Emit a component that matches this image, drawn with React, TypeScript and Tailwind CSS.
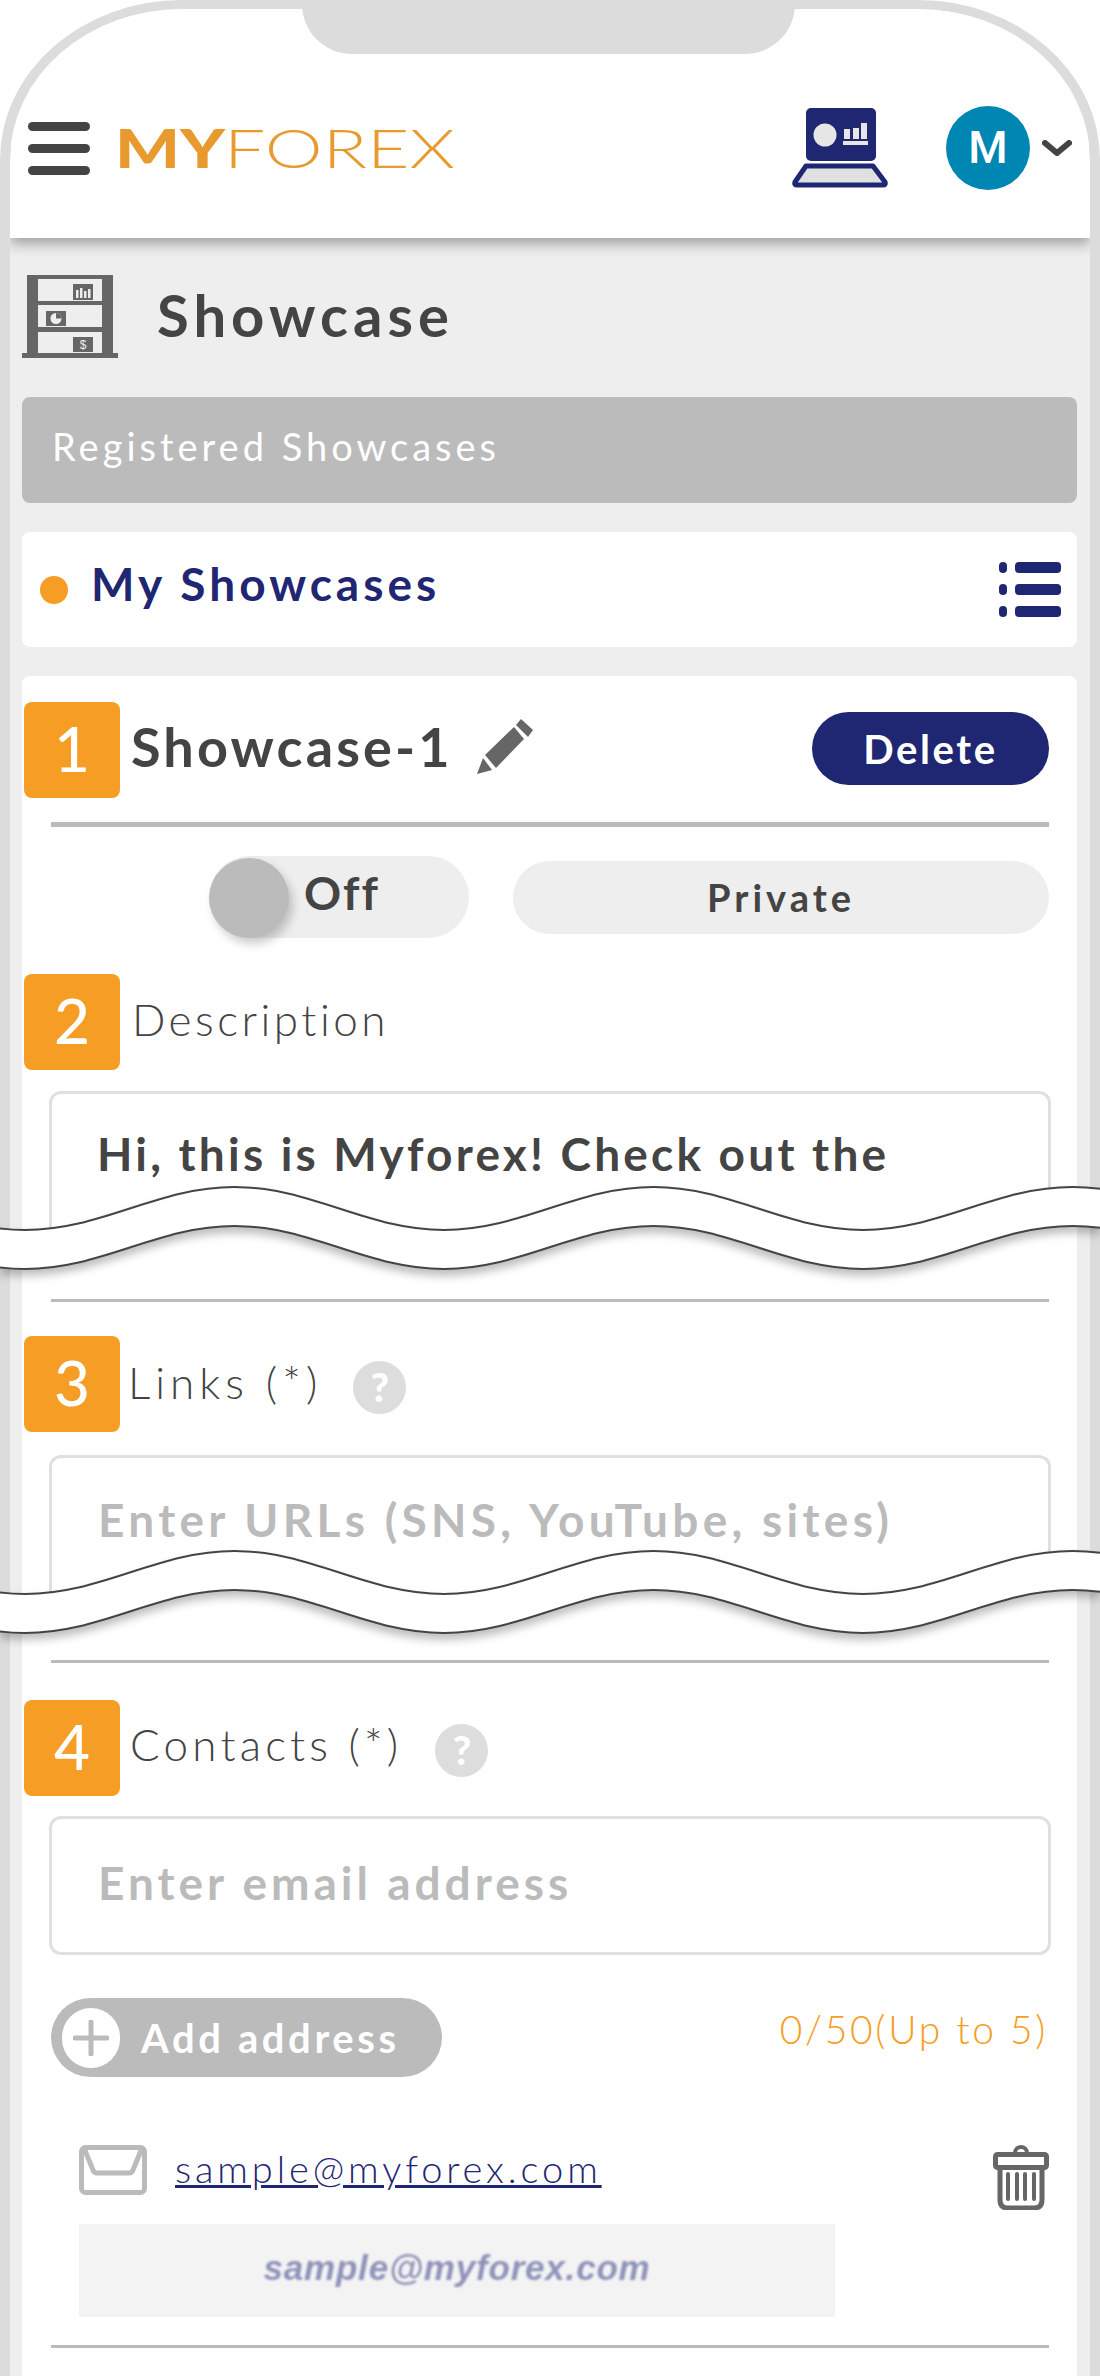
import type { ReactNode } from 'react'

const PERIOD = 419
const HALF = PERIOD / 2
const AMP = 43
const START = 25 - PERIOD

// y of the curve at each half period, from the trough at x=25
function nodes(baseY: number) {
  const out: { x: number; y: number }[] = []
  for (let i = 0; i < 10; i++) out.push({ x: START + i * HALF, y: i % 2 === 0 ? baseY : baseY - AMP })
  return out
}

function forward(baseY: number) {
  const n = nodes(baseY)
  let d = `M ${n[0].x} ${n[0].y}`
  for (let i = 1; i < n.length; i++) {
    d += ` C ${n[i - 1].x + HALF * 0.37} ${n[i - 1].y} ${n[i].x - HALF * 0.37} ${n[i].y} ${n[i].x} ${n[i].y}`
  }
  return d
}

function backward(baseY: number) {
  const n = nodes(baseY).reverse()
  let d = ` L ${n[0].x} ${n[0].y}`
  for (let i = 1; i < n.length; i++) {
    d += ` C ${n[i - 1].x - HALF * 0.37} ${n[i - 1].y} ${n[i].x + HALF * 0.37} ${n[i].y} ${n[i].x} ${n[i].y}`
  }
  return d
}

function WaveBreak({ first }: { first?: boolean }) {
  return (
    <svg
      viewBox="0 0 1100 120"
      className={`absolute left-0 w-[1100px] h-[120px] z-20 drop-shadow-[0_6px_4px_rgba(0,0,0,0.25)] ${
        first ? 'top-[1180px]' : 'top-[1544px]'
      }`}
    >
      <path d={`${forward(50)}${backward(89)} Z`} fill="#fff" />
      <path d={forward(50)} fill="none" stroke="#444" strokeWidth="2" />
      <path d={forward(89)} fill="none" stroke="#444" strokeWidth="2" />
    </svg>
  )
}

function Badge({ n }: { n: number }) {
  return (
    <div className="w-[96px] h-[96px] shrink-0 rounded-lg bg-[#f59d24] pb-[4px] flex items-center justify-center text-white text-[62px] font-medium leading-none">
      {n}
    </div>
  )
}

function HelpDot() {
  return (
    <div className="w-[53px] h-[53px] rounded-full bg-[#dddddd] text-white font-black text-[40px] leading-none flex items-center justify-center">
      ?
    </div>
  )
}

function Rule({ thick, className }: { thick?: boolean; className: string }) {
  return <div className={`ml-[29px] mr-[28px] bg-[#bbbbbb] ${thick ? 'h-[5px]' : 'h-[3px]'} ${className}`} />
}

function Field({ className, children }: { className: string; children: ReactNode }) {
  return (
    <div
      className={`ml-[27px] mr-[26px] border-[3px] border-[#e0e0e0] rounded-xl text-[46px] leading-[56px] font-bold whitespace-nowrap ${className}`}
    >
      {children}
    </div>
  )
}

function Logo() {
  return (
    <svg viewBox="0 0 340 70" className="w-[340px] h-[70px] ml-[25px]">
      <text
        x="0"
        y="55"
        fontFamily="Lato"
        fontWeight="900"
        fontSize="54"
        fill="#e99a2e"
        textLength="110"
        lengthAdjust="spacingAndGlyphs"
      >
        MY
      </text>
      <text
        x="109"
        y="55"
        fontFamily="Lato"
        fontWeight="300"
        fontSize="54"
        fill="#e99a2e"
        textLength="231"
        lengthAdjust="spacingAndGlyphs"
      >
        FOREX
      </text>
    </svg>
  )
}

function ComputerIcon() {
  return (
    <svg viewBox="0 0 96 80" className="w-[96px] h-[80px]">
      <rect x="14" y="0" width="70" height="53" rx="5" fill="#1f2672" />
      <circle cx="33" cy="27" r="11.5" fill="#e6e6e6" />
      <rect x="52" y="21" width="6" height="10" fill="#e6e6e6" />
      <rect x="61" y="20" width="6" height="11" fill="#e6e6e6" />
      <rect x="69" y="15" width="6" height="16" fill="#e6e6e6" />
      <rect x="51" y="33" width="25" height="4" fill="#e6e6e6" />
      <path d="M14 58 H81 L93 74 Q94 77 91 77 H5 Q2 77 3 74 Z" fill="#e0e0e0" stroke="#1f2672" strokeWidth="5" strokeLinejoin="round" />
    </svg>
  )
}

function ShelfIcon() {
  return (
    <svg viewBox="0 0 96 83" className="w-[96px] h-[83px] shrink-0">
      <rect x="5" y="0" width="86" height="78" fill="#666" />
      <rect x="0" y="78" width="96" height="5" fill="#666" />
      <rect x="16" y="4" width="64" height="22" fill="#eee" />
      <rect x="16" y="30" width="64" height="22" fill="#eee" />
      <rect x="16" y="57" width="64" height="21" fill="#eee" />
      <rect x="51" y="9" width="20" height="16" fill="#666" />
      <rect x="54" y="15" width="2.5" height="8" fill="#eee" />
      <rect x="58" y="13" width="2.5" height="10" fill="#eee" />
      <rect x="62" y="16" width="2.5" height="7" fill="#eee" />
      <rect x="66" y="14" width="2.5" height="9" fill="#eee" />
      <rect x="24" y="36" width="20" height="15" fill="#666" />
      <circle cx="34" cy="43.5" r="5.5" fill="#eee" />
      <path d="M34 43.5 V38 A5.5 5.5 0 0 1 39.5 43.5 Z" fill="#666" />
      <rect x="51" y="62" width="20" height="15" fill="#666" />
      <text x="61" y="74" textAnchor="middle" fontSize="12" fill="#eee" fontFamily="Liberation Sans">$</text>
    </svg>
  )
}

function Pencil() {
  return (
    <svg viewBox="0 0 58 57" className="w-[58px] h-[57px]">
      <path d="M1 56 L7 40 L16 52 Z" fill="#666" />
      <path d="M9 37 L20 50 L48 21 L38 9 Z" fill="#666" />
      <path d="M45 1 L57 12 L52 19 L40 7 Z" fill="#666" />
    </svg>
  )
}

function Envelope() {
  return (
    <svg viewBox="0 0 68 50" className="w-[68px] h-[50px] shrink-0">
      <rect x="2.5" y="2.5" width="63" height="45" rx="4" fill="none" stroke="#bbb" strokeWidth="5" />
      <path d="M5 3 L14 25 Q15 28 18 28 H50 Q53 28 54 25 L63 3" fill="none" stroke="#bbb" strokeWidth="5" />
    </svg>
  )
}

function Trash() {
  return (
    <svg viewBox="0 0 56 65" className="w-[56px] h-[65px] shrink-0">
      <circle cx="28" cy="8" r="6" fill="none" stroke="#666" strokeWidth="4" />
      <rect x="2.5" y="9.5" width="51" height="13" rx="2" fill="#fff" stroke="#666" strokeWidth="5" />
      <path d="M7 23 V55 Q7 63 15 63 H41 Q49 63 49 55 V23" fill="none" stroke="#666" strokeWidth="5" />
      {[15, 24, 32, 41].map((x) => (
        <rect key={x} x={x - 2} y="27" width="4" height="29" rx="2" fill="#666" />
      ))}
    </svg>
  )
}

export default function App() {
  return (
    <div className="relative w-[1100px] h-[2376px] overflow-hidden bg-white text-[#444] font-['Lato','Noto_Sans',sans-serif]">
      <div className="h-full bg-[#eeeeee] border-x-[10px] border-t-[9px] border-[#dcdcdc] rounded-t-[182px_160px] overflow-hidden flex flex-col">
        <header className="relative z-10 shrink-0 h-[229px] bg-white pt-[97px] pl-[18px] flex items-start shadow-[0_6px_12px_rgba(0,0,0,0.32)]">
          <div className="h-[84px] flex items-center">
            <div className="flex flex-col gap-[13px] w-[62px]">
              <div className="h-[9px] rounded-full bg-[#444]" />
              <div className="h-[9px] rounded-full bg-[#444]" />
              <div className="h-[9px] rounded-full bg-[#444]" />
            </div>
            <Logo />
          </div>
          <div className="ml-auto h-[84px] flex items-center pr-[18px]">
            <ComputerIcon />
            <div className="ml-[58px] w-[84px] h-[84px] rounded-full bg-[#0086b3] text-white text-[45px] font-medium flex items-center justify-center font-['Roboto',sans-serif]">
              M
            </div>
            <svg viewBox="0 0 30 16" className="ml-[12px] w-[30px] h-[16px]">
              <path d="M3 3 L15 13 L27 3" fill="none" stroke="#444" strokeWidth="6" strokeLinecap="round" strokeLinejoin="round" />
            </svg>
          </div>
        </header>

        <main className="flex-1 pl-[12px] pr-[13px]">
          <div className="mt-[37px] h-[83px] flex items-center">
            <ShelfIcon />
            <h1 className="ml-[39px] -mt-[3px] text-[58px] font-bold tracking-[5px] leading-none">Showcase</h1>
          </div>

          <div className="mt-[39px] h-[106px] rounded-lg bg-[#bbbbbb] pl-[30px] pb-[8px] flex items-center text-white text-[38px] tracking-[4px]">
            Registered Showcases
          </div>

          <div className="mt-[29px] h-[115px] rounded-lg bg-white pl-[18px] pr-[16px] flex items-center">
            <span className="w-[28px] h-[28px] rounded-full bg-[#f59d24]" />
            <h2 className="ml-[23px] -mt-[12px] text-[#1f2672] text-[46px] font-bold tracking-[4px]">My Showcases</h2>
            <div className="ml-auto w-[62px] flex flex-col gap-[11px]">
              {[0, 1, 2].map((i) => (
                <div key={i} className="flex gap-[8px] h-[11px]">
                  <div className="w-[8px] rounded-sm bg-[#1f2672]" />
                  <div className="flex-1 rounded-sm bg-[#1f2672]" />
                </div>
              ))}
            </div>
          </div>

          <section className="mt-[29px] h-[1800px] rounded-t-lg bg-white pt-[26px]">
            <div className="pl-[2px] pr-[28px] flex items-center">
              <Badge n={1} />
              <h3 className="ml-[11px] -mt-[8px] text-[54px] font-bold tracking-[3.1px]">Showcase-1</h3>
              <div className="ml-[23px] -mt-[8px]">
                <Pencil />
              </div>
              <button
                type="button"
                className="ml-auto -mt-[3px] w-[237px] h-[73px] rounded-full bg-[#1f2672] text-white text-[40px] font-bold tracking-[2.6px]"
              >
                Delete
              </button>
            </div>
            <Rule thick className="mt-[24px]" />

            <div className="mt-[29px] h-[82px] flex items-center">
              <div className="relative ml-[187px] w-[260px] h-[82px] rounded-full bg-[#eeeeee]">
                <div className="absolute left-0 top-[2px] w-[80px] h-[80px] rounded-full bg-[#bbbbbb] shadow-[4px_6px_10px_rgba(0,0,0,0.2)]" />
                <span className="absolute left-[95px] top-[7px] text-[46px] leading-[60px] font-bold tracking-[2px]">Off</span>
              </div>
              <div className="ml-[44px] w-[536px] h-[73px] rounded-full bg-[#eeeeee] flex items-center justify-center text-[38px] font-bold tracking-[4px]">
                Private
              </div>
            </div>

            <div className="mt-[36px] pl-[2px] flex items-center">
              <Badge n={2} />
              <span className="ml-[12px] text-[44px] font-light tracking-[3.5px] -mt-[6px]">Description</span>
            </div>
            <Field className="mt-[21px] h-[137px] pl-[45px] pt-[32px] tracking-[3.2px] border-b-0 rounded-b-none">
              Hi, this is Myforex! Check out the
            </Field>
            <Rule className="mt-[71px]" />

            <div className="mt-[34px] pl-[2px] flex items-center">
              <Badge n={3} />
              <span className="ml-[8px] text-[44px] font-light tracking-[5px] -mt-[4px]">Links (*)</span>
              <div className="ml-[31px] mt-[6px]">
                <HelpDot />
              </div>
            </div>
            <Field className="mt-[23px] h-[137px] pl-[46px] pt-[34px] tracking-[4.3px] border-b-0 rounded-b-none text-[#bbbbbb]">
              Enter URLs (SNS, YouTube, sites)
            </Field>
            <Rule className="mt-[68px]" />

            <div className="mt-[37px] pl-[2px] flex items-center">
              <Badge n={4} />
              <span className="ml-[10px] text-[44px] font-light tracking-[4.2px] -mt-[8px]">Contacts (*)</span>
              <div className="ml-[33px] mt-[4px]">
                <HelpDot />
              </div>
            </div>
            <Field className="mt-[20px] h-[139px] pl-[46px] pt-[36px] tracking-[4px] text-[#bbbbbb]">Enter email address</Field>

            <div className="mt-[43px] ml-[29px] mr-[29px] flex items-start justify-between">
              <div className="w-[391px] h-[79px] rounded-full bg-[#bbbbbb] pl-[11px] flex items-center text-white text-[40px] font-bold tracking-[3.6px]">
                <div className="w-[58px] h-[60px] rounded-full bg-white flex items-center justify-center">
                  <svg viewBox="0 0 36 36" className="w-[36px] h-[36px]">
                    <path d="M18 2 V34 M2 18 H34" stroke="#bbb" strokeWidth="5" strokeLinecap="round" />
                  </svg>
                </div>
                <span className="ml-[21px]">Add address</span>
              </div>
              <span className="mt-[2px] text-[#f59d24] text-[39px] font-light tracking-[2.7px]">0/50(Up to 5)</span>
            </div>

            <div className="mt-[68px] ml-[57px] mr-[28px] flex items-start">
              <Envelope />
              <a className="ml-[28px] mt-[-5px] text-[#1f2672] text-[38px] font-light tracking-[3.9px] underline">sample@myforex.com</a>
              <div className="ml-auto">
                <Trash />
              </div>
            </div>
            <div className="mt-[14px] ml-[57px] w-[756px] h-[93px] pb-[4px] bg-[#f3f3f3] flex items-center justify-center">
              <span className="blur-[0.8px] italic font-bold text-[#8f93ba] text-[35px] tracking-[0.8px] font-['Liberation_Sans',sans-serif]">
                sample@myforex.com
              </span>
            </div>
            <Rule className="mt-[28px]" />
          </section>
        </main>
      </div>

      {/* notch */}
      <div className="absolute z-30 top-0 left-[302px] w-[493px] h-[54px] rounded-b-[50px] bg-[#dcdcdc]" />
      <WaveBreak first />
      <WaveBreak />
    </div>
  )
}
